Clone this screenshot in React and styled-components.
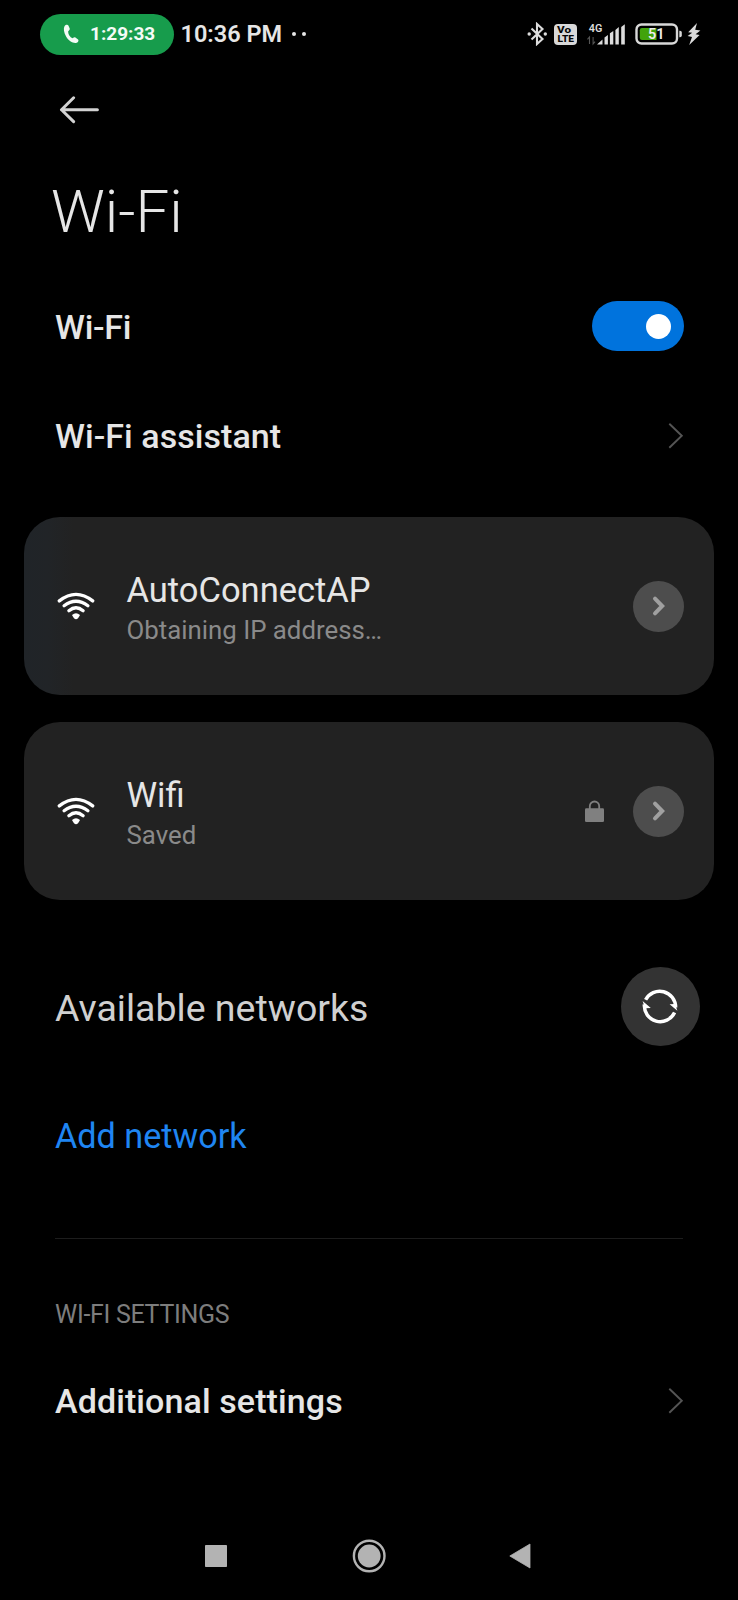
import React from "react";
import styled, { createGlobalStyle } from "styled-components";

const Global = createGlobalStyle`
  *, *::before, *::after { box-sizing: border-box; }
  html, body { margin: 0; background: #000; }
  body { font-family: Roboto, "Noto Sans", sans-serif; color: #e6e6e6; }
  button { border: 0; padding: 0; background: none; font: inherit; color: inherit; }
  svg { display: block; flex: none; }
`;

const Screen = styled.div`
  width: 738px;
  height: 1600px;
  display: flex;
  flex-direction: column;
  background: #000;
  overflow: hidden;
`;

const StatusBar = styled.header`
  height: 68px;
  padding: 0 37px 0 40px;
  display: flex;
  align-items: center;
  justify-content: space-between;
`;

const StatusGroup = styled.div`
  display: flex;
  align-items: center;
`;

const CallPill = styled.div`
  width: 133.5px;
  height: 41px;
  padding-left: 23px;
  display: flex;
  align-items: center;
  gap: 11px;
  border-radius: 21px;
  background: #179c4c;
  color: #f4fbf6;
  font-size: 19px;
  font-weight: 700;
  line-height: 24px;
  white-space: nowrap;
`;

const Clock = styled.span`
  margin-left: 7px;
  font-size: 23.5px;
  font-weight: 600;
  line-height: 28px;
  white-space: nowrap;
`;

const Dots = styled.span`
  display: flex;
  gap: 6px;
  margin-left: 10px;
  &::before, &::after {
    content: "";
    width: 4px;
    height: 4px;
    border-radius: 50%;
    background: #e6e6e6;
  }
`;

const BackBar = styled.div`
  height: 83px;
  padding: 0 59px;
  display: flex;
  align-items: center;
`;

const Title = styled.h1`
  height: 120px;
  margin: 0;
  padding-left: 51px;
  font-size: 60px;
  font-weight: 300;
  line-height: 122px;
`;

const Row = styled.div`
  height: ${(p) => p.$height}px;
  padding: 0 ${(p) => p.$right || 54.5}px 0 55px;
  display: flex;
  align-items: center;
  justify-content: space-between;
`;

const Label = styled.span`
  padding-top: ${(p) => p.$drop || 0}px;
  font-size: ${(p) => p.$size || 34}px;
  font-weight: ${(p) => p.$weight || 500};
  line-height: 1.2;
  color: ${(p) => p.$color || "#e6e6e6"};
  letter-spacing: ${(p) => p.$spacing || "0"};
  white-space: nowrap;
`;

const Toggle = styled.button`
  width: 91.5px;
  height: 50.5px;
  padding-right: 13px;
  display: flex;
  align-items: center;
  justify-content: flex-end;
  border-radius: 26px;
  background: #0073dd;
`;

const Knob = styled.span`
  width: 25px;
  height: 25px;
  border-radius: 50%;
  background: #fff;
`;

const Cards = styled.section`
  padding: 27px 24px 0;
  display: flex;
  flex-direction: column;
  gap: 27px;
`;

const Card = styled.article`
  height: 178px;
  padding: 0 30.5px 0 33px;
  display: flex;
  align-items: center;
  border-radius: 36px;
  background: ${(p) =>
    p.$connecting ? "linear-gradient(90deg, #202428 0, #212427 24px, #222 50px)" : "#222"};
`;

const Network = styled.div`
  flex: 1;
  margin-left: 31.5px;
  padding-top: 5px;
  display: flex;
  flex-direction: column;
`;

const Ssid = styled.span`
  font-size: 34.5px;
  line-height: 42px;
`;

const State = styled.span`
  font-size: 25.8px;
  line-height: 38px;
  color: #8a8a8a;
`;

const Details = styled.button`
  width: 50.5px;
  height: 51px;
  margin-left: 29px;
  display: flex;
  align-items: center;
  justify-content: center;
  border-radius: 50%;
  background: #4d4d4d;
`;

const Refresh = styled.button`
  width: 79px;
  height: 79px;
  padding: 0 1px 1px 0;
  display: flex;
  align-items: center;
  justify-content: center;
  border-radius: 50%;
  background: #333;
`;

const Divider = styled.hr`
  width: 628px;
  height: 1px;
  margin: 0 0 0 55px;
  border: 0;
  background: #1d1d1d;
`;

const NavBar = styled.nav`
  height: 88px;
  margin-top: auto;
  padding: 0 207px 0 205px;
  display: flex;
  align-items: center;
  justify-content: space-between;
`;

const PhoneIcon = () => (
  <svg width="16" height="20" viewBox="0 0 16 20" fill="#f4fbf6">
    <path d="M1.5 2.2C2.6.7 4.6.4 5.4 1.4L6.7 4.6C7 5.6 6.4 6.2 5.2 7.2C5 10 7 13.2 9.6 14.2C10.8 13.4 11.6 13 12.4 13.5L15.1 15.4C16 16.2 15.2 18.2 13.7 18.7C10.4 19.7 5.7 17 3.1 12.5C.8 8.6.3 4.3 1.5 2.2Z" />
  </svg>
);

const BluetoothIcon = () => (
  <svg width="21" height="24" viewBox="0 0 21 24" fill="none" stroke="#dcdcdc" strokeWidth="2.1">
    <path d="M4.5 6.5L15.5 17L10 22V2L15.5 7L4.5 17.5" />
    <circle cx="2.2" cy="12" r="1.7" fill="#dcdcdc" stroke="none" />
    <circle cx="18.3" cy="12" r="1.7" fill="#dcdcdc" stroke="none" />
  </svg>
);

const VolteIcon = () => (
  <svg width="23" height="21" viewBox="0 0 23 21" fontFamily="Roboto, sans-serif" fontWeight="800">
    <rect width="23" height="21" rx="4" fill="#d8d8d8" />
    <text x="3" y="9.2" fontSize="9" textLength="14" lengthAdjust="spacingAndGlyphs" fill="#050505">Vo</text>
    <text x="3.5" y="18.2" fontSize="9.5" textLength="16.5" lengthAdjust="spacingAndGlyphs" fill="#050505">LTE</text>
  </svg>
);

const SignalIcon = () => (
  <svg width="39" height="23" viewBox="0 0 39 23" fill="#dcdcdc">
    <text x="1.8" y="8.6" fontSize="10.8" fontWeight="600" fontFamily="Roboto, sans-serif">4G</text>
    <path d="M2.5 21V14L.5 16.4M6.1 14V21L8 18.6" fill="none" stroke="#555" strokeWidth="1.1" />
    <path d="M10 21.5L15.5 16.5V21.5ZM17.5 14.5L20.9 12V21.5H17.5ZM22.9 10.3L26.3 8V21.5H22.9ZM28.4 7L31.8 4V21.5H28.4ZM34.2 4L37.8 1.2V21.5H34.2Z" />
  </svg>
);

const BatteryIcon = () => (
  <svg width="47" height="22" viewBox="0 0 47 22">
    <rect x="1.5" y="1.5" width="40.5" height="19" rx="5" fill="none" stroke="#d8d8d8" strokeWidth="2.4" />
    <path d="M44.3 7.8H45Q46.8 7.8 46.8 9.4V12.6Q46.8 14.2 45 14.2H44.3Z" fill="#d8d8d8" />
    <path d="M7 5H21.5V17H7Q4.8 17 4.8 14.8V7.2Q4.8 5 7 5Z" fill="#41a30b" />
    <text x="13" y="16.2" fontSize="14.5" fontWeight="600" fontFamily="Roboto, sans-serif" fill="#eee">51</text>
  </svg>
);

const BoltIcon = () => (
  <svg width="14" height="22" viewBox="0 0 14 22" fill="#dcdcdc">
    <path d="M10 0L1.2 9.2L5.2 9.8L.6 13L5 13.9L2.2 22L12.6 12L8.6 11.2L13.4 7.4L8.2 6.8Z" />
  </svg>
);

const BackArrow = () => (
  <svg width="41" height="28" viewBox="0 0 41 28" fill="none" stroke="#d2d2d2" strokeWidth="3" strokeLinecap="round" strokeLinejoin="round">
    <path d="M14.6 1.8L2.5 13.7L14.6 25.6M2.5 13.7H38.4" />
  </svg>
);

const Chevron = () => (
  <svg width="16" height="28" viewBox="0 0 16 28" fill="none" stroke="#545454" strokeWidth="1.9">
    <path d="M1.3 1.8L13.8 13.8L1.3 25.8" />
  </svg>
);

const DetailsChevron = () => (
  <svg width="14" height="22" viewBox="0 0 14 22" fill="none" stroke="#a0a0a0" strokeWidth="4" strokeLinecap="round" strokeLinejoin="miter">
    <path d="M4 3.6L11.2 11L4 18.4" />
  </svg>
);

const WifiIcon = () => (
  <svg width="38" height="28" viewBox="0 0 38 28" fill="none" stroke="#fff" strokeWidth="3.3" strokeLinecap="round">
    <path d="M2.3 8.9Q19-4.1 35.7 8.9" />
    <path d="M7.1 13.8Q19 4.8 30.9 13.8" />
    <path d="M11.9 18.7Q19 12.7 26.1 18.7" />
    <path d="M15 23Q19 19.6 23 23Q21 27.2 19 27.2Q17 27.2 15 23Z" fill="#fff" stroke="none" />
  </svg>
);

const LockIcon = () => (
  <svg width="19" height="22" viewBox="0 0 19 22">
    <path d="M4.8 9V6.2A4.7 4.7 0 0 1 14.2 6.2V9" fill="none" stroke="#808080" strokeWidth="1.8" />
    <rect y="8.3" width="19" height="13.7" rx="1.3" fill="#808080" />
  </svg>
);

const RefreshIcon = () => (
  <svg width="38" height="38" viewBox="0 0 38 38" fill="none" stroke="#fff" strokeWidth="3.5">
    <path d="M4.6 12.8A15.9 15.9 0 0 1 34.6 20.5" />
    <path d="M33.6 25.6A15.9 15.9 0 0 1 3.4 17.5" />
    <path d="M36.4 23.7L28.6 17.2L34 17ZM1.6 13.9L9.8 21L4 21.2Z" fill="#fff" stroke="none" />
  </svg>
);

const RecentsIcon = () => (
  <svg width="22" height="22" viewBox="0 0 22 22">
    <rect width="22" height="22" rx="0.8" fill="#b3b3b3" />
  </svg>
);

const HomeIcon = () => (
  <svg width="36" height="34" viewBox="0 0 36 34">
    <circle cx="19.2" cy="17" r="15.3" fill="none" stroke="#b3b3b3" strokeWidth="2.4" />
    <circle cx="19.2" cy="17" r="11.4" fill="#b3b3b3" />
  </svg>
);

const NavBackIcon = () => (
  <svg width="22" height="26" viewBox="0 0 22 26">
    <path d="M.8 13L21 1V25Z" fill="#b3b3b3" stroke="#b3b3b3" strokeWidth="0.8" strokeLinejoin="round" />
  </svg>
);

const StatusIcons = styled(StatusGroup)`
  & > svg:nth-child(2) { margin-left: 5.5px; }
  & > svg:nth-child(3) { margin-left: 10.5px; }
  & > svg:nth-child(4) { margin-left: 9px; }
  & > svg:nth-child(5) { margin-left: 5px; }
`;

function NetworkCard({ ssid, state, locked, connecting }) {
  return (
    <Card $connecting={connecting}>
      <WifiIcon />
      <Network>
        <Ssid>{ssid}</Ssid>
        <State>{state}</State>
      </Network>
      {locked && <LockIcon />}
      <Details aria-label={`${ssid} details`}>
        <DetailsChevron />
      </Details>
    </Card>
  );
}

export default function App() {
  return (
    <Screen>
      <Global />
      <StatusBar>
        <StatusGroup>
          <CallPill>
            <PhoneIcon />
            1:29:33
          </CallPill>
          <Clock>10:36 PM</Clock>
          <Dots />
        </StatusGroup>
        <StatusIcons>
          <BluetoothIcon />
          <VolteIcon />
          <SignalIcon />
          <BatteryIcon />
          <BoltIcon />
        </StatusIcons>
      </StatusBar>
      <BackBar>
        <BackArrow />
      </BackBar>
      <Title>Wi-Fi</Title>
      <Row $height={110}>
        <Label $drop={2} $spacing="-0.3px">Wi-Fi</Label>
        <Toggle role="switch" aria-checked="true" aria-label="Wi-Fi">
          <Knob />
        </Toggle>
      </Row>
      <Row $height={109}>
        <Label $drop={2} $spacing="0.05px">Wi-Fi assistant</Label>
        <Chevron />
      </Row>
      <Cards>
        <NetworkCard ssid="AutoConnectAP" state="Obtaining IP address…" connecting />
        <NetworkCard ssid="Wifi" state="Saved" locked />
      </Cards>
      <Row $height={213} $right={38}>
        <Label $drop={4} $size={37.5} $weight={400} $color="#d0d0d0">Available networks</Label>
        <Refresh aria-label="Refresh">
          <RefreshIcon />
        </Refresh>
      </Row>
      <Row $height={44}>
        <Label $drop={3} $size={34.2} $weight={400} $color="#1f85f2">Add network</Label>
      </Row>
      <Row $height={81} />
      <Divider />
      <Row $height={150}>
        <Label $drop={2} $size={25} $weight={400} $color="#7d7d7d" $spacing="-0.3px">WI-FI SETTINGS</Label>
      </Row>
      <Row $height={24}>
        <Label $spacing="0.1px">Additional settings</Label>
        <Chevron />
      </Row>
      <NavBar>
        <RecentsIcon />
        <HomeIcon />
        <NavBackIcon />
      </NavBar>
    </Screen>
  );
}
